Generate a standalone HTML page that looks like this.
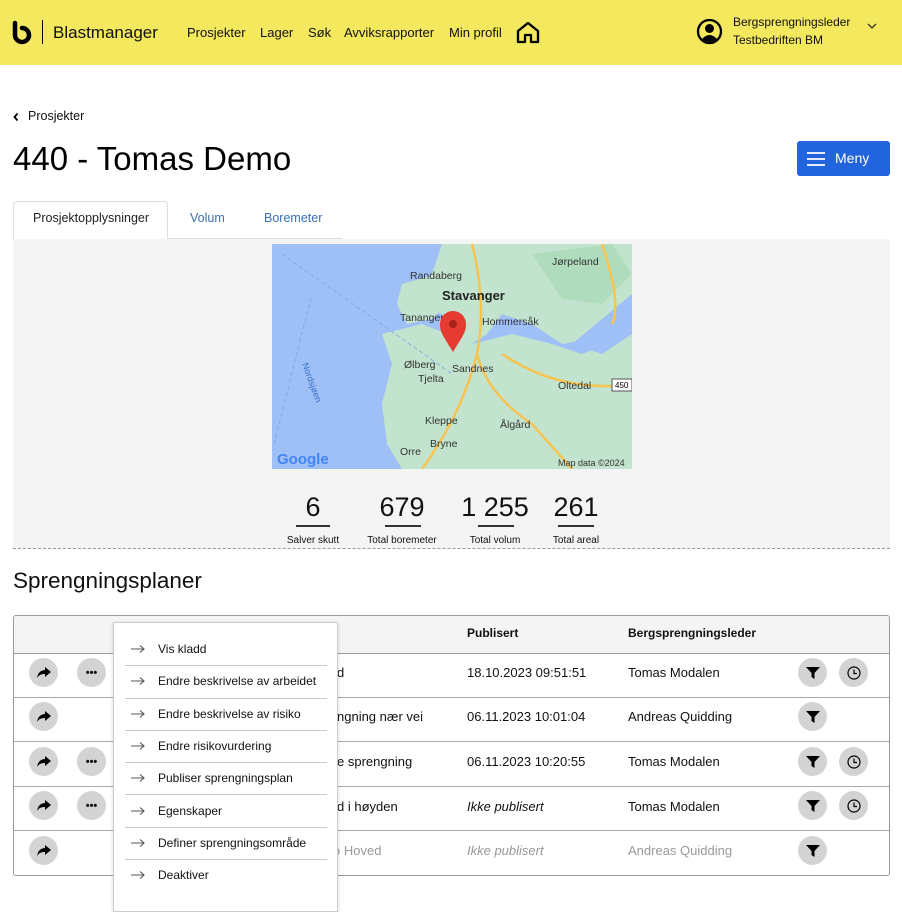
<!DOCTYPE html>
<html><head><meta charset="utf-8"><style>
*{margin:0;padding:0;box-sizing:border-box}
body{width:902px;height:902px;overflow:hidden;background:#fff;font-family:"Liberation Sans",Arial,sans-serif;color:#111;position:relative}
.a{position:absolute;white-space:nowrap}
.hdr{position:absolute;left:0;top:0;width:902px;height:65px;background:#f3e85e}
.nav{font-size:13px;color:#111;top:25px}
.circ{position:absolute;width:29px;height:29px;border-radius:50%;background:#d3d3d3;display:flex;align-items:center;justify-content:center}
.row{position:absolute;left:14px;width:875px;border-top:1px solid #a9a9a9}
.cell{position:absolute;font-size:13px;white-space:nowrap}
.mi{position:absolute;left:130px;font-size:12px;white-space:nowrap;color:#111}
.mi svg{display:inline-block;width:16px;height:10px;margin-right:12px;vertical-align:-1px}
.sep{position:absolute;left:125px;width:202px;height:1px;background:#c8c8c8}
</style></head><body>
<div class="hdr"></div>
<svg class="a" style="left:10px;top:20px" width="26" height="26" viewBox="0 0 26 26"><path d="M5 3 V15 A7 7 0 1 0 12 8" stroke="#000" stroke-width="4.5" fill="none" stroke-linecap="round"/></svg>
<div class="a" style="left:42px;top:20px;width:1px;height:24px;background:#000"></div>
<div class="a" style="left:53px;top:23px;font-size:17px;color:#111">Blastmanager</div>
<div class="a nav" style="left:187px">Prosjekter</div>
<div class="a nav" style="left:260px">Lager</div>
<div class="a nav" style="left:308px">Søk</div>
<div class="a nav" style="left:344px">Avviksrapporter</div>
<div class="a nav" style="left:449px">Min profil</div>
<svg class="a" style="left:516px;top:21px" width="24" height="23" viewBox="0 0 24 23"><path d="M2 10 L12 2 L22 10 V21 H15 V14 H9 V21 H2 Z" fill="none" stroke="#000" stroke-width="2.3" stroke-linejoin="round"/></svg>
<svg class="a" style="left:696px;top:18px" width="27" height="27" viewBox="0 0 27 27"><circle cx="13.5" cy="13.5" r="11.5" fill="none" stroke="#000" stroke-width="2.3"/><circle cx="13.5" cy="10.5" r="4.5" fill="#000"/><path d="M6 21 Q13.5 13 21 21 Q13.5 27 6 21Z" fill="#000"/></svg>
<div class="a" style="left:733px;top:15px;font-size:12px">Bergsprengningsleder</div>
<div class="a" style="left:733px;top:33px;font-size:12px">Testbedriften BM</div>
<svg class="a" style="left:866px;top:22px" width="12" height="8" viewBox="0 0 12 8"><path d="M2 2 L6 6 L10 2" fill="none" stroke="#333" stroke-width="1.3"/></svg>

<svg class="a" style="left:12px;top:112px" width="8" height="10" viewBox="0 0 8 10"><path d="M5.5 1.5 L2.5 5 L5.5 8.5" fill="none" stroke="#000" stroke-width="1.8"/></svg>
<div class="a" style="left:28px;top:109px;font-size:12.5px">Prosjekter</div>
<div class="a" style="left:13px;top:140px;font-size:33px;color:#000">440 - Tomas Demo</div>
<div class="a" style="left:797px;top:141px;width:93px;height:35px;background:#2263de;border-radius:3px"></div>
<svg class="a" style="left:806px;top:151px" width="20" height="16" viewBox="0 0 20 16"><path d="M1 2H19M1 8H19M1 14H19" stroke="#fff" stroke-width="1.8"/></svg>
<div class="a" style="left:835px;top:150px;font-size:14px;color:#fff">Meny</div>

<div class="a" style="left:13px;top:201px;width:155px;height:39px;border:1px solid #ddd;border-bottom:none;border-radius:4px 4px 0 0;background:#fff"></div>
<div class="a" style="left:33px;top:211px;font-size:12.5px;color:#222">Prosjektopplysninger</div>
<div class="a" style="left:190px;top:211px;font-size:12.5px;color:#3a6fb0">Volum</div>
<div class="a" style="left:264px;top:211px;font-size:12.5px;color:#3a6fb0">Boremeter</div>
<div class="a" style="left:168px;top:238px;width:174px;height:1px;background:#ddd"></div>
<div class="a" style="left:13px;top:239px;width:877px;height:310px;background:#f4f4f4;border-bottom:1px dashed #999"></div>

<svg class="a" style="left:272px;top:244px" width="360" height="225" viewBox="0 0 360 225">
<rect width="360" height="225" fill="#9ec0f7"/>
<path d="M170 0 L360 0 L360 60 L320 95 L290 100 L260 80 L230 70 L215 90 L200 100 L180 95 L170 70 L150 60 L160 30 Z" fill="#c2e3cd"/>
<path d="M260 10 L340 0 L360 30 L330 60 L290 55 Z" fill="#b0dcbe"/>
<path d="M130 40 L165 30 L175 60 L160 75 L135 80 L125 60 Z" fill="#c2e3cd"/>
<path d="M110 90 L150 80 L200 100 L240 90 L280 100 L310 110 L360 90 L360 225 L130 225 L115 200 L110 160 L120 120 Z" fill="#c2e3cd"/>
<path d="M360 50 L330 75 L300 100 L330 110 L360 90 Z" fill="#9ec0f7"/>
<path d="M200 0 Q215 60 205 110 Q215 150 260 180 L300 225 M205 110 Q190 170 150 225 M330 0 Q350 60 340 80 M230 110 Q290 150 360 140" stroke="#f5c451" stroke-width="2.5" fill="none"/>
<path d="M2 200 L40 50 M10 10 L180 130" stroke="#7aa3e6" stroke-width="0.8" stroke-dasharray="4 3" fill="none"/>
<g font-family="Liberation Sans,sans-serif" fill="#333" font-size="10.5">
<text x="138" y="35">Randaberg</text><text x="170" y="56" font-size="13" font-weight="bold" fill="#222">Stavanger</text>
<text x="128" y="77">Tananger</text><text x="210" y="81">Hommersåk</text><text x="132" y="124">Ølberg</text><text x="146" y="138">Tjelta</text>
<text x="180" y="128">Sandnes</text><text x="286" y="145">Oltedal</text><text x="153" y="180">Kleppe</text><text x="228" y="184">Ålgård</text>
<text x="158" y="203">Bryne</text><text x="128" y="211">Orre</text><text x="280" y="21">Jørpeland</text>
<text x="30" y="120" transform="rotate(70 30 120)" fill="#3a6fc6" font-size="9">Nordsjøen</text>
<text x="286" y="222" font-size="9">Map data ©2024</text>
<text x="5" y="220" font-size="15" font-weight="bold" fill="#4285f4">Google</text></g>
<rect x="340" y="135" width="20" height="12" fill="#fff" stroke="#555"/><text x="343" y="144" font-size="8" font-family="Liberation Sans">450</text>
<path d="M181 108 C170 90 168 88 168 80 A13 13 0 0 1 194 80 C194 88 192 90 181 108Z" fill="#e53b30"/><circle cx="181" cy="80" r="4" fill="#a5231b"/>
</svg>

<div class="a" style="left:284px;top:492px;width:58px;text-align:center;font-size:27px">6</div>
<div class="a" style="left:296px;top:525px;width:34px;height:2px;background:#333"></div>
<div class="a" style="left:284px;top:535px;width:58px;text-align:center;font-size:10px">Salver skutt</div>
<div class="a" style="left:358px;top:492px;width:88px;text-align:center;font-size:27px">679</div>
<div class="a" style="left:385px;top:525px;width:36px;height:2px;background:#333"></div>
<div class="a" style="left:358px;top:535px;width:88px;text-align:center;font-size:10px">Total boremeter</div>
<div class="a" style="left:457px;top:492px;width:76px;text-align:center;font-size:27px">1 255</div>
<div class="a" style="left:478px;top:525px;width:36px;height:2px;background:#333"></div>
<div class="a" style="left:457px;top:535px;width:76px;text-align:center;font-size:10px">Total volum</div>
<div class="a" style="left:546px;top:492px;width:60px;text-align:center;font-size:27px">261</div>
<div class="a" style="left:558px;top:525px;width:36px;height:2px;background:#333"></div>
<div class="a" style="left:546px;top:535px;width:60px;text-align:center;font-size:10px">Total areal</div>

<div class="a" style="left:13px;top:568px;font-size:22.5px;color:#111">Sprengningsplaner</div>

<div class="a" style="left:13px;top:615px;width:877px;height:261px;border:1px solid #999;border-radius:3px;overflow:hidden">
<div style="height:38px;background:#f4f4f4;border-bottom:1px solid #999"></div></div>
<div class="cell" style="left:467px;top:626px;font-size:12px;font-weight:bold">Publisert</div>
<div class="cell" style="left:628px;top:626px;font-size:12px;font-weight:bold">Bergsprengningsleder</div>
<div class="row" style="top:697px"></div><div class="row" style="top:741px"></div><div class="row" style="top:786px"></div><div class="row" style="top:830px"></div>

<div class="cell" style="left:337px;top:665px">d</div><div class="cell" style="left:467px;top:665px">18.10.2023 09:51:51</div><div class="cell" style="left:628px;top:665px">Tomas Modalen</div>
<div class="cell" style="left:337px;top:709px">ngning nær vei</div><div class="cell" style="left:467px;top:709px">06.11.2023 10:01:04</div><div class="cell" style="left:628px;top:709px">Andreas Quidding</div>
<div class="cell" style="left:337px;top:754px">e sprengning</div><div class="cell" style="left:467px;top:754px">06.11.2023 10:20:55</div><div class="cell" style="left:628px;top:754px">Tomas Modalen</div>
<div class="cell" style="left:337px;top:799px">d i høyden</div><div class="cell" style="left:467px;top:799px;font-style:italic">Ikke publisert</div><div class="cell" style="left:628px;top:799px">Tomas Modalen</div>
<div class="cell" style="left:333px;top:843px;color:#999">o Hoved</div><div class="cell" style="left:467px;top:843px;color:#999;font-style:italic">Ikke publisert</div><div class="cell" style="left:628px;top:843px;color:#999">Andreas Quidding</div>

<div class="circ" style="left:29px;top:658px"><svg width="14" height="12" viewBox="0 0 14 12"><path d="M8 0 L14 5 L8 10 V7 C4 7 2 8 0 11 C1 6 3 3.5 8 3Z" fill="#000"/></svg></div>
<div class="circ" style="left:29px;top:702px"><svg width="14" height="12" viewBox="0 0 14 12"><path d="M8 0 L14 5 L8 10 V7 C4 7 2 8 0 11 C1 6 3 3.5 8 3Z" fill="#000"/></svg></div>
<div class="circ" style="left:29px;top:747px"><svg width="14" height="12" viewBox="0 0 14 12"><path d="M8 0 L14 5 L8 10 V7 C4 7 2 8 0 11 C1 6 3 3.5 8 3Z" fill="#000"/></svg></div>
<div class="circ" style="left:29px;top:791px"><svg width="14" height="12" viewBox="0 0 14 12"><path d="M8 0 L14 5 L8 10 V7 C4 7 2 8 0 11 C1 6 3 3.5 8 3Z" fill="#000"/></svg></div>
<div class="circ" style="left:29px;top:836px"><svg width="14" height="12" viewBox="0 0 14 12"><path d="M8 0 L14 5 L8 10 V7 C4 7 2 8 0 11 C1 6 3 3.5 8 3Z" fill="#000"/></svg></div>
<div class="circ" style="left:77px;top:658px;font-size:11px;font-weight:bold">•••</div>
<div class="circ" style="left:77px;top:747px;font-size:11px;font-weight:bold">•••</div>
<div class="circ" style="left:77px;top:791px;font-size:11px;font-weight:bold">•••</div>

<div class="circ" style="left:798px;top:658px"><svg width="14" height="14" viewBox="0 0 14 14"><path d="M0 1H14L8.5 7V13L5.5 11V7Z" fill="#000"/></svg></div>
<div class="circ" style="left:798px;top:702px"><svg width="14" height="14" viewBox="0 0 14 14"><path d="M0 1H14L8.5 7V13L5.5 11V7Z" fill="#000"/></svg></div>
<div class="circ" style="left:798px;top:747px"><svg width="14" height="14" viewBox="0 0 14 14"><path d="M0 1H14L8.5 7V13L5.5 11V7Z" fill="#000"/></svg></div>
<div class="circ" style="left:798px;top:791px"><svg width="14" height="14" viewBox="0 0 14 14"><path d="M0 1H14L8.5 7V13L5.5 11V7Z" fill="#000"/></svg></div>
<div class="circ" style="left:798px;top:836px"><svg width="14" height="14" viewBox="0 0 14 14"><path d="M0 1H14L8.5 7V13L5.5 11V7Z" fill="#000"/></svg></div>
<div class="circ" style="left:839px;top:658px"><svg width="14" height="14" viewBox="0 0 14 14"><circle cx="7" cy="7" r="6" fill="none" stroke="#000" stroke-width="1.2"/><path d="M7 3.5V7.5H10" fill="none" stroke="#000" stroke-width="1.2"/></svg></div>
<div class="circ" style="left:839px;top:747px"><svg width="14" height="14" viewBox="0 0 14 14"><circle cx="7" cy="7" r="6" fill="none" stroke="#000" stroke-width="1.2"/><path d="M7 3.5V7.5H10" fill="none" stroke="#000" stroke-width="1.2"/></svg></div>
<div class="circ" style="left:839px;top:791px"><svg width="14" height="14" viewBox="0 0 14 14"><circle cx="7" cy="7" r="6" fill="none" stroke="#000" stroke-width="1.2"/><path d="M7 3.5V7.5H10" fill="none" stroke="#000" stroke-width="1.2"/></svg></div>

<div class="a" style="left:113px;top:622px;width:225px;height:290px;background:#fff;border:1px solid #ccc;box-shadow:0 1px 4px rgba(0,0,0,.15)"></div>
<div class="mi" style="top:642px"><svg viewBox="0 0 16 10"><path d="M1 5H14M10 1.5L14 5L10 8.5" fill="none" stroke="#555" stroke-width="1.1"/></svg>Vis kladd</div>
<div class="sep" style="top:665px"></div>
<div class="mi" style="top:674px"><svg viewBox="0 0 16 10"><path d="M1 5H14M10 1.5L14 5L10 8.5" fill="none" stroke="#555" stroke-width="1.1"/></svg>Endre beskrivelse av arbeidet</div>
<div class="sep" style="top:698px"></div>
<div class="mi" style="top:707px"><svg viewBox="0 0 16 10"><path d="M1 5H14M10 1.5L14 5L10 8.5" fill="none" stroke="#555" stroke-width="1.1"/></svg>Endre beskrivelse av risiko</div>
<div class="sep" style="top:730px"></div>
<div class="mi" style="top:739px"><svg viewBox="0 0 16 10"><path d="M1 5H14M10 1.5L14 5L10 8.5" fill="none" stroke="#555" stroke-width="1.1"/></svg>Endre risikovurdering</div>
<div class="sep" style="top:762px"></div>
<div class="mi" style="top:771px"><svg viewBox="0 0 16 10"><path d="M1 5H14M10 1.5L14 5L10 8.5" fill="none" stroke="#555" stroke-width="1.1"/></svg>Publiser sprengningsplan</div>
<div class="sep" style="top:794px"></div>
<div class="mi" style="top:804px"><svg viewBox="0 0 16 10"><path d="M1 5H14M10 1.5L14 5L10 8.5" fill="none" stroke="#555" stroke-width="1.1"/></svg>Egenskaper</div>
<div class="sep" style="top:827px"></div>
<div class="mi" style="top:836px"><svg viewBox="0 0 16 10"><path d="M1 5H14M10 1.5L14 5L10 8.5" fill="none" stroke="#555" stroke-width="1.1"/></svg>Definer sprengningsområde</div>
<div class="sep" style="top:859px"></div>
<div class="mi" style="top:868px"><svg viewBox="0 0 16 10"><path d="M1 5H14M10 1.5L14 5L10 8.5" fill="none" stroke="#555" stroke-width="1.1"/></svg>Deaktiver</div>
</body></html>
